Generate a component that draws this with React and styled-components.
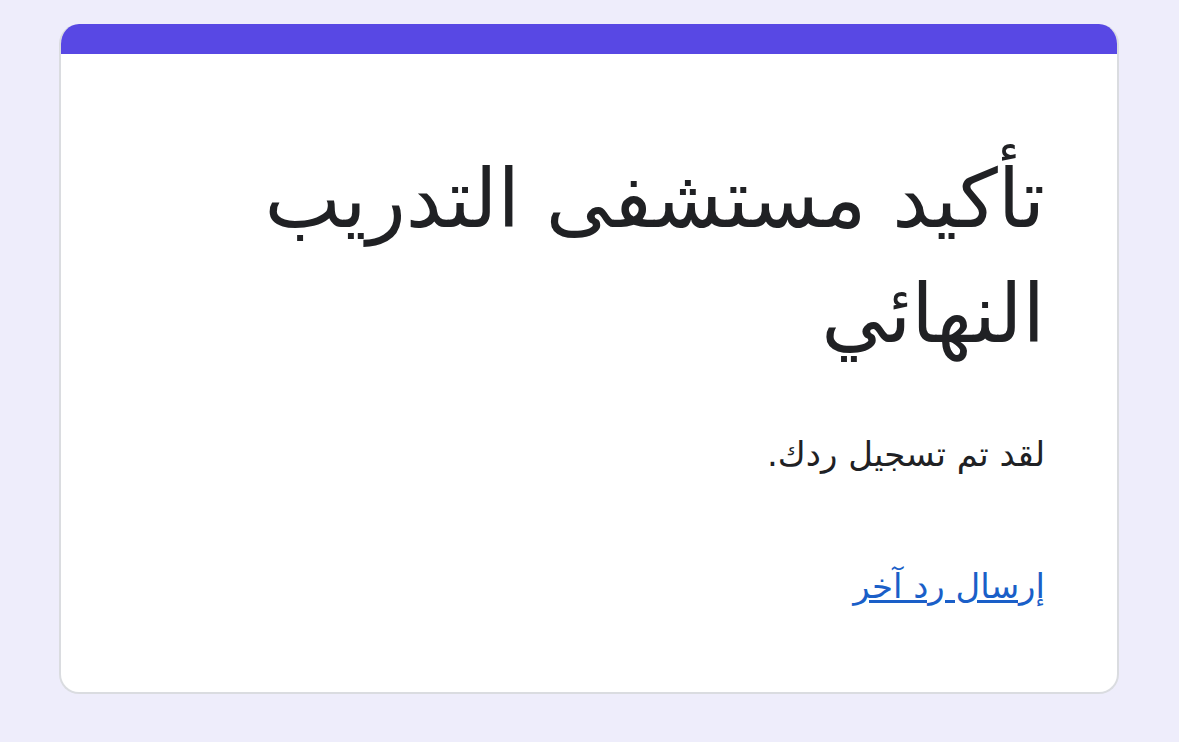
import React from 'react';
import styled, { createGlobalStyle } from 'styled-components';

const GlobalStyle = createGlobalStyle`
	html, body {
		margin: 0;
		padding: 0;
		background: #eeedfb;
	}
	body {
		font-family: "DejaVu Sans", "Noto Sans", sans-serif;
	}
`;

function App() {
	return (
		<>
			<GlobalStyle />
			<Page>
				<Card dir="rtl">
					<TopBar />
					<Body>
						<Title>تأكيد مستشفى التدريب النهائي</Title>
						<Message>لقد تم تسجيل ردك.</Message>
						<AnotherLink href="#">إرسال رد آخر</AnotherLink>
					</Body>
				</Card>
			</Page>
		</>
	);
}

export default App;


const Page = styled.div`
	min-height: 742px;
	padding: 24px 60px 0 59px;
	box-sizing: border-box;
`;
const Card = styled.div`
	width: 1060px;
	background: #fff;
	border-radius: 20px;
	overflow: hidden;
	border: 2px solid #dadce0;
	border-top: none;
	box-sizing: border-box;
`;
const TopBar = styled.div`
	height: 30px;
	background: #5848e4;
	margin: 0 -2px;
`;
const Body = styled.div`
	padding: 88px 72px 84px 72px;
	display: flex;
	flex-direction: column;
	align-items: flex-start;
`;
const Title = styled.h1`
	margin: 0;
	font-size: 81px;
	font-weight: normal;
	line-height: 115px;
	color: #202124;
`;
const Message = styled.p`
	margin: 60px 0 0;
	font-size: 34px;
	line-height: 44px;
	color: #202124;
`;
const AnotherLink = styled.a`
	margin-top: 88px;
	font-size: 34px;
	line-height: 44px;
	color: #1a5fc8;
	text-decoration: underline;
	text-underline-offset: 2px;
`;
